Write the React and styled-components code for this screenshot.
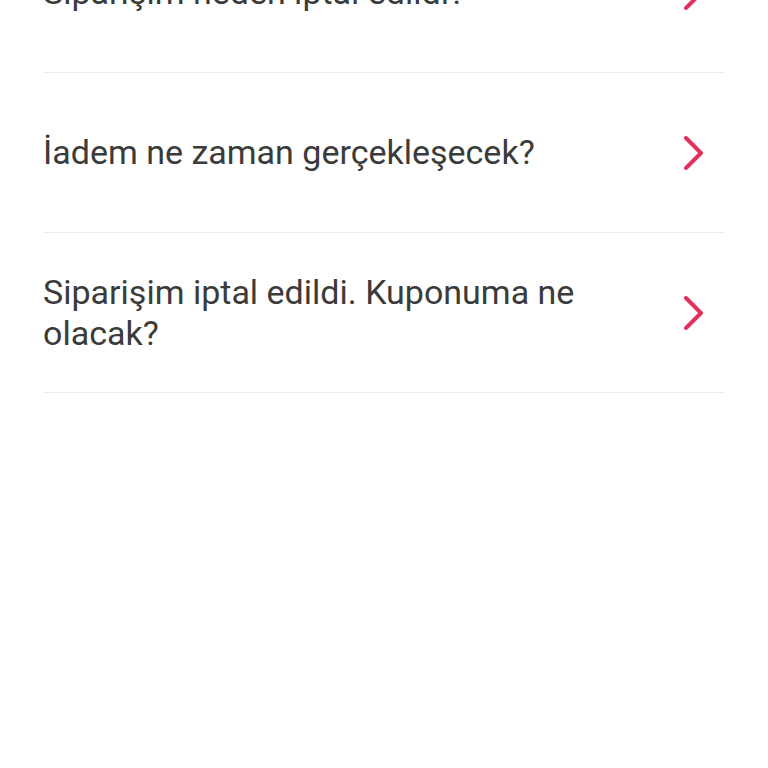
import React from "react";
import styled, { createGlobalStyle } from "styled-components";

const Global = createGlobalStyle`
  html, body { margin: 0; padding: 0; background: #ffffff; }
  body { font-family: Roboto, "Noto Sans", sans-serif; overflow: hidden; }
`;

const Page = styled.div`
  width: 768px;
  height: 768px;
  overflow: hidden;
  background: #fff;
`;

const List = styled.ul`
  list-style: none;
  margin: -87px 0 0;
  padding: 0 43px 0 43px;
`;

const Row = styled.li`
  display: flex;
  align-items: center;
  min-height: 160px;
  border-bottom: 1px solid #ececec;
  box-sizing: border-box;
`;

const Question = styled.span`
  flex: 1;
  padding-right: 60px;
  font-size: 34px;
  line-height: 41px;
  color: #3b3b3b;
  font-weight: 400;
`;

const Chevron = styled.svg`
  width: 24px;
  height: 34px;
  margin-right: 19px;
  flex: none;
`;

const Arrow = () => (
  <Chevron viewBox="0 0 24 34">
    <path d="M4 2 L19 17 L4 32" fill="none" stroke="#e0325c" strokeWidth="4" strokeLinecap="round" strokeLinejoin="round" />
  </Chevron>
);

const questions = [
  "Siparişim neden iptal edildi?",
  "İadem ne zaman gerçekleşecek?",
  "Siparişim iptal edildi. Kuponuma ne olacak?",
];

export default function App() {
  return (
    <Page>
      <Global />
      <List>
        {questions.map((q) => (
          <Row key={q}>
            <Question>{q}</Question>
            <Arrow />
          </Row>
        ))}
      </List>
    </Page>
  );
}
